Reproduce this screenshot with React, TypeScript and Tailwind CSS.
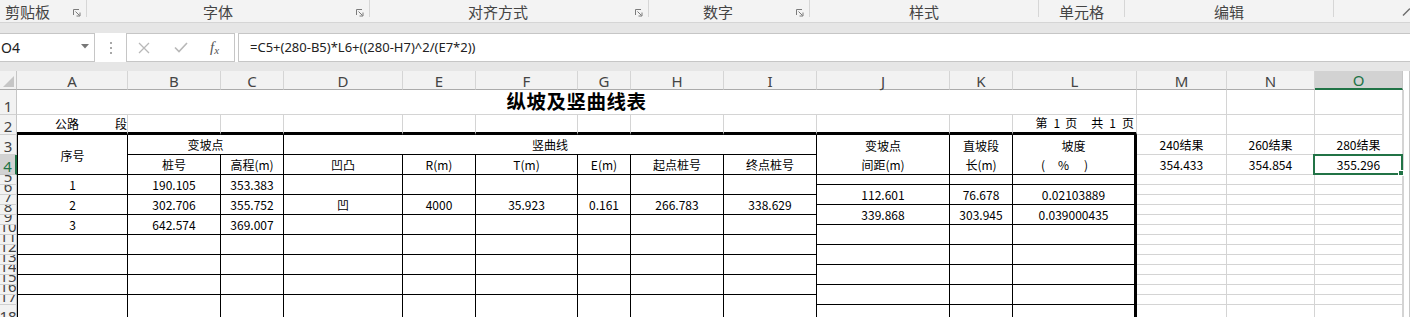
import React from "react";

const ui = "font-['Noto_Sans','Noto_Sans_CJK_SC',sans-serif]";
const cjk = "font-['Noto_Sans_CJK_SC','Noto_Sans',sans-serif]";

function Launcher() {
  return (
    <svg width="8" height="8" viewBox="0 0 8 8" fill="none" stroke="#7b7b7b" strokeWidth="1" className="mt-[3px]">
      <path d="M0.5 6 V0.5 H6" />
      <path d="M2.5 2.5 L6.5 6.5" />
      <path d="M3.5 7 H7 V3.5" />
    </svg>
  );
}

function Sep() {
  return <div className="w-px h-[17px] self-start bg-[#d6d6d6] shrink-0" />;
}

function Ribbon() {
  return (
    <div className={`h-[23px] shrink-0 flex bg-[#f3f3f3] border-b border-[#d5d5d5] text-[15px] leading-none text-[#444] ${cjk}`}>
      <div className="w-[86px] shrink-0 flex items-center pl-[5px] pr-[5px]">
        <span>剪贴板</span>
        <span className="ml-auto flex"><Launcher /></span>
      </div>
      <Sep />
      <div className="w-[282px] shrink-0 flex items-center pl-[116px] pr-[5px]">
        <span>字体</span>
        <span className="ml-auto flex"><Launcher /></span>
      </div>
      <Sep />
      <div className="w-[278px] shrink-0 flex items-center pl-[98px] pr-[5px]">
        <span>对齐方式</span>
        <span className="ml-auto flex"><Launcher /></span>
      </div>
      <Sep />
      <div className="w-[160px] shrink-0 flex items-center pl-[54px] pr-[5px]">
        <span>数字</span>
        <span className="ml-auto flex"><Launcher /></span>
      </div>
      <Sep />
      <div className="w-[228px] shrink-0 flex items-center justify-center">样式</div>
      <Sep />
      <div className="w-[85px] shrink-0 flex items-center justify-center">单元格</div>
      <Sep />
      <div className="w-[208px] shrink-0 flex items-center justify-center">编辑</div>
      <Sep />
      <div className="flex-1 flex items-center justify-end">
        <svg width="8" height="8" viewBox="0 0 8 8" className="mt-[2px]">
          <path d="M1 7.5 L8 0.5" stroke="#6b6b6b" strokeWidth="1.4" fill="none" />
        </svg>
      </div>
    </div>
  );
}

function FormulaBar() {
  return (
    <div className={`h-[29px] shrink-0 flex bg-white ${ui}`}>
      <div className="w-[95px] shrink-0 h-full border-y border-r border-[#c6c6c6] flex items-center pl-[1px] text-[14px] leading-none text-[#222]">
        <span>O4</span>
        <svg className="ml-auto mr-[5px] mb-[3px]" width="8" height="5" viewBox="0 0 8 5">
          <path d="M0 0 H8 L4 4.5 Z" fill="#777" />
        </svg>
      </div>
      <div className="w-[31px] shrink-0 h-full flex items-center justify-center">
        <svg width="2" height="12" viewBox="0 0 2 12">
          <rect x="0" y="0" width="2" height="2" fill="#a8a8a8" />
          <rect x="0" y="5" width="2" height="2" fill="#a8a8a8" />
          <rect x="0" y="10" width="2" height="2" fill="#a8a8a8" />
        </svg>
      </div>
      <div className="w-[109px] shrink-0 h-full border border-[#c6c6c6] flex items-center">
        <svg className="ml-[11px]" width="12" height="12" viewBox="0 0 12 12" fill="none" stroke="#b8b8b8" strokeWidth="1.3">
          <path d="M1 1 L11 11 M11 1 L1 11" />
        </svg>
        <svg className="ml-[24px]" width="14" height="11" viewBox="0 0 14 11" fill="none" stroke="#b8b8b8" strokeWidth="1.6">
          <path d="M1 5.5 L5 9.5 L13 1" />
        </svg>
        <span className="ml-[22px] font-['Liberation_Serif',serif] italic text-[15px] leading-none text-[#555]">
          f<span className="text-[11px] relative top-[2px]">x</span>
        </span>
      </div>
      <div className="w-[3px] shrink-0" />
      <div className="flex-1 h-full border-y border-l border-[#c6c6c6] flex items-center pl-[11px] text-[13px] leading-none text-[#222]">
        =C5+(280-B5)*L6+((280-H7)^2/(E7*2))
      </div>
    </div>
  );
}

const cols: { l: string; w: string; sel?: boolean }[] = [
  { l: "A", w: "w-[111px]" },
  { l: "B", w: "w-[93px]" },
  { l: "C", w: "w-[63px]" },
  { l: "D", w: "w-[119px]" },
  { l: "E", w: "w-[73px]" },
  { l: "F", w: "w-[102px]" },
  { l: "G", w: "w-[53px]" },
  { l: "H", w: "w-[93px]" },
  { l: "I", w: "w-[93px]" },
  { l: "J", w: "w-[133px]" },
  { l: "K", w: "w-[63px]" },
  { l: "L", w: "w-[124px]" },
  { l: "M", w: "w-[90px]" },
  { l: "N", w: "w-[88px]" },
  { l: "O", w: "w-[88px]", sel: true },
];

const rowHeads: { n: string; h: string; sel?: boolean }[] = [
  { n: "1", h: "h-[25px]" },
  { n: "2", h: "h-[20px]" },
  { n: "3", h: "h-[20px]" },
  { n: "4", h: "h-[20px]", sel: true },
  { n: "5", h: "h-[10px]" },
  { n: "6", h: "h-[10px]" },
  { n: "7", h: "h-[10px]" },
  { n: "8", h: "h-[10px]" },
  { n: "9", h: "h-[10px]" },
  { n: "10", h: "h-[10px]" },
  { n: "11", h: "h-[10px]" },
  { n: "12", h: "h-[10px]" },
  { n: "13", h: "h-[10px]" },
  { n: "14", h: "h-[10px]" },
  { n: "15", h: "h-[10px]" },
  { n: "16", h: "h-[10px]" },
  { n: "17", h: "h-[10px]" },
  { n: "18", h: "h-[20px]" },
];

function Cell({ w, h, cls = "", children }: { w: string; h: string; cls?: string; children?: React.ReactNode }) {
  return <div className={`${w} ${h} shrink-0 flex items-center justify-center ${cls}`}>{children}</div>;
}

const BK = "border-r border-b border-black";
const GR = "border-r border-b border-[#d4d4d4]";

const leftW = [
  "w-[111px] border-l",
  "w-[93px]",
  "w-[63px]",
  "w-[119px]",
  "w-[73px]",
  "w-[102px]",
  "w-[53px]",
  "w-[93px]",
  "w-[93px]",
];

const leftRows: { h: string; v: string[] }[] = [
  { h: "h-[20px]", v: ["1", "190.105", "353.383", "", "", "", "", "", ""] },
  { h: "h-[20px]", v: ["2", "302.706", "355.752", "凹", "4000", "35.923", "0.161", "266.783", "338.629"] },
  { h: "h-[20px]", v: ["3", "642.574", "369.007", "", "", "", "", "", ""] },
  { h: "h-[20px]", v: ["", "", "", "", "", "", "", "", ""] },
  { h: "h-[20px]", v: ["", "", "", "", "", "", "", "", ""] },
  { h: "h-[20px]", v: ["", "", "", "", "", "", "", "", ""] },
  { h: "h-[30px]", v: ["", "", "", "", "", "", "", "", ""] },
];

const rightW = ["w-[133px]", "w-[63px]", "w-[124px] border-r-[3px]"];

const rightRows: { h: string; v: string[] }[] = [
  { h: "h-[10px]", v: ["", "", ""] },
  { h: "h-[20px]", v: ["112.601", "76.678", "0.02103889"] },
  { h: "h-[20px]", v: ["339.868", "303.945", "0.039000435"] },
  { h: "h-[20px]", v: ["", "", ""] },
  { h: "h-[20px]", v: ["", "", ""] },
  { h: "h-[20px]", v: ["", "", ""] },
  { h: "h-[20px]", v: ["", "", ""] },
  { h: "h-[20px]", v: ["", "", ""] },
];

const moW = ["w-[90px]", "w-[88px]", "w-[88px]"];

const moRows: { h: string; v: string[]; sel?: boolean }[] = [
  { h: "h-[20px]", v: ["240结果", "260结果", "280结果"] },
  { h: "h-[20px]", v: ["354.433", "354.854", "355.296"], sel: true },
  ...Array.from({ length: 13 }, () => ({ h: "h-[10px]", v: ["", "", ""] })),
  { h: "h-[20px]", v: ["", "", ""] },
];

function ColHeaders() {
  return (
    <div className={`flex shrink-0 h-[19px] bg-[#f2f2f2] text-[15px] leading-none text-[#444] ${ui}`}>
      <div className="w-[17px] shrink-0 h-full border-r border-b border-r-[#c6c6c6] border-b-[#ababab] flex items-end justify-end p-[2px]">
        <svg width="11" height="11" viewBox="0 0 11 11">
          <path d="M11 0 V11 H0 Z" fill="#c6c6c6" />
        </svg>
      </div>
      {cols.map((c) =>
        c.sel ? (
          <div key={c.l} className={`${c.w} shrink-0 h-full flex items-center justify-center pt-[2px] bg-[#d2d2d2] text-[#217346] border-r border-r-[#c6c6c6] border-b-2 border-b-[#217346]`}>
            {c.l}
          </div>
        ) : (
          <div key={c.l} className={`${c.w} shrink-0 h-full flex items-center justify-center pt-[2px] border-r border-r-[#d5d5d5] border-b border-b-[#ababab]`}>
            {c.l}
          </div>
        )
      )}
      <div className="w-[7px] shrink-0 h-full bg-white border-r border-[#c8c8c8]" />
    </div>
  );
}

function RowHeaders() {
  return (
    <div className={`w-[17px] shrink-0 flex flex-col bg-[#f2f2f2] text-[15px] leading-none text-[#444] ${ui}`}>
      {rowHeads.map((r) =>
        r.sel ? (
          <div key={r.n} className={`${r.h} w-[17px] shrink-0 flex items-end justify-center overflow-hidden bg-[#d2d2d2] text-[#217346] border-b border-b-[#c6c6c6] border-r-2 border-r-[#217346]`}>
            <span className="whitespace-nowrap">{r.n}</span>
          </div>
        ) : (
          <div key={r.n} className={`${r.h} w-[17px] shrink-0 flex items-end justify-center overflow-hidden border-b border-b-[#d0d0d0] border-r border-r-[#c6c6c6]`}>
            <span className="whitespace-nowrap">{r.n}</span>
          </div>
        )
      )}
    </div>
  );
}

function Sheet() {
  return (
    <div className={`flex flex-col text-[12px] leading-none text-black ${cjk}`}>
      {/* Row 1 */}
      <div className="flex shrink-0 h-[25px]">
        <div className="w-[1120px] shrink-0 h-full border-r border-b border-[#d4d4d4] flex items-center justify-center pb-[2px]">
          <span className="text-[19.5px] font-bold tracking-[0.5px]">纵坡及竖曲线表</span>
        </div>
        {moW.map((w, i) => (
          <Cell key={i} w={w} h="h-full" cls={GR} />
        ))}
      </div>
      {/* Row 2 */}
      <div className="flex shrink-0 h-[20px]">
        <div className="w-[111px] shrink-0 h-full border-r border-r-[#d4d4d4] border-b-[3px] border-b-black flex items-center pl-[38px]">
          <span>公路</span>
          <span className="ml-auto">段</span>
        </div>
        {["w-[93px]", "w-[63px]", "w-[119px]", "w-[73px]", "w-[102px]", "w-[53px]", "w-[93px]", "w-[93px]", "w-[133px]", "w-[63px]"].map((w, i) => (
          <div key={i} className={`${w} shrink-0 h-full border-r border-r-[#d4d4d4] border-b-[3px] border-b-black`} />
        ))}
        <div className="w-[124px] shrink-0 h-full border-r border-r-[#d4d4d4] border-b-[3px] border-b-black flex items-center justify-end pr-[2px] pb-[1px]">
          <span>第</span>
          <span className="ml-[6px]">1</span>
          <span className="ml-[5px]">页</span>
          <span className="ml-[14px]">共</span>
          <span className="ml-[6px]">1</span>
          <span className="ml-[6px]">页</span>
        </div>
        {moW.map((w, i) => (
          <Cell key={i} w={w} h="h-full" cls={GR} />
        ))}
      </div>
      {/* Rows 3-18 */}
      <div className="flex shrink-0">
        {/* Left table A-I */}
        <div className="w-[800px] shrink-0 flex flex-col">
          <div className="flex h-[40px]">
            <Cell w="w-[111px]" h="h-full" cls="border-l border-r border-b border-black pt-[2px]">序号</Cell>
            <div className="w-[156px] shrink-0 flex flex-col">
              <Cell w="w-full" h="h-[20px]" cls={`${BK} pt-[1px]`}>变坡点</Cell>
              <div className="flex h-[20px]">
                <Cell w="w-[93px]" h="h-full" cls={`${BK} pt-[1px]`}>桩号</Cell>
                <Cell w="w-[63px]" h="h-full" cls={`${BK} pt-[1px]`}>高程(m)</Cell>
              </div>
            </div>
            <div className="w-[533px] shrink-0 flex flex-col">
              <Cell w="w-full" h="h-[20px]" cls={`${BK} pt-[1px]`}>竖曲线</Cell>
              <div className="flex h-[20px]">
                <Cell w="w-[119px]" h="h-full" cls={`${BK} pt-[1px]`}>凹凸</Cell>
                <Cell w="w-[73px]" h="h-full" cls={`${BK} pt-[1px]`}>R(m)</Cell>
                <Cell w="w-[102px]" h="h-full" cls={`${BK} pt-[1px]`}>T(m)</Cell>
                <Cell w="w-[53px]" h="h-full" cls={`${BK} pt-[1px]`}>E(m)</Cell>
                <Cell w="w-[93px]" h="h-full" cls={`${BK} pt-[1px]`}>起点桩号</Cell>
                <Cell w="w-[93px]" h="h-full" cls={`${BK} pt-[1px]`}>终点桩号</Cell>
              </div>
            </div>
          </div>
          {leftRows.map((r, ri) => (
            <div key={ri} className={`flex ${r.h}`}>
              {r.v.map((v, ci) => (
                <Cell key={ci} w={leftW[ci]} h="h-full" cls={BK}>
                  {v}
                </Cell>
              ))}
            </div>
          ))}
        </div>
        {/* Right table J-L */}
        <div className="w-[320px] shrink-0 flex flex-col">
          <div className="flex h-[40px]">
            <div className={`w-[133px] shrink-0 h-full flex flex-col ${BK}`}>
              <div className="h-[20px] flex items-center justify-center pt-[1px]">变坡点</div>
              <div className="flex-1 flex items-center justify-center">间距(m)</div>
            </div>
            <div className={`w-[63px] shrink-0 h-full flex flex-col ${BK}`}>
              <div className="h-[20px] flex items-center justify-center pt-[1px]">直坡段</div>
              <div className="flex-1 flex items-center justify-center">长(m)</div>
            </div>
            <div className={`w-[124px] shrink-0 h-full flex flex-col ${BK} border-r-[3px]`}>
              <div className="h-[20px] flex items-center justify-center pt-[1px]">坡度</div>
              <div className="flex-1 flex items-center justify-center">
                <span className="flex mr-[18px]">
                  <span>(</span>
                  <span className="ml-[13px]">%</span>
                  <span className="ml-[15px]">)</span>
                </span>
              </div>
            </div>
          </div>
          {rightRows.map((r, ri) => (
            <div key={ri} className={`flex ${r.h}`}>
              {r.v.map((v, ci) => (
                <Cell key={ci} w={rightW[ci]} h="h-full" cls={BK}>
                  {v}
                </Cell>
              ))}
            </div>
          ))}
        </div>
        {/* M-O */}
        <div className="w-[266px] shrink-0 flex flex-col">
          {moRows.map((r, ri) => (
            <div key={ri} className={`flex ${r.h}`}>
              {r.v.map((v, ci) =>
                r.sel && ci === 2 ? (
                  <div key={ci} className={`${moW[ci]} h-full shrink-0 flex items-center justify-center relative ${GR}`}>
                    {v}
                    <div className="absolute -left-[2px] -top-[1px] -right-[1px] -bottom-[1px] border-2 border-[#217346] z-10" />
                    <div className="absolute -right-[2px] -bottom-[2px] w-[6px] h-[6px] bg-[#217346] border border-white z-20" />
                  </div>
                ) : (
                  <Cell key={ci} w={moW[ci]} h="h-full" cls={GR}>
                    {v}
                  </Cell>
                )
              )}
            </div>
          ))}
        </div>
      </div>
    </div>
  );
}

export default function App() {
  return (
    <div className="w-[1410px] h-[317px] overflow-hidden bg-white flex flex-col">
      <Ribbon />
      <div className="h-[10px] shrink-0 bg-[#e6e6e6]" />
      <FormulaBar />
      <div className="h-[9px] shrink-0 bg-[#e6e6e6]" />
      <ColHeaders />
      <div className="flex shrink-0">
        <RowHeaders />
        <div className="w-[1386px] shrink-0">
          <Sheet />
        </div>
        <div className="w-[7px] shrink-0 bg-white border-l border-r border-l-[#d4d4d4] border-r-[#c8c8c8]" />
      </div>
    </div>
  );
}
